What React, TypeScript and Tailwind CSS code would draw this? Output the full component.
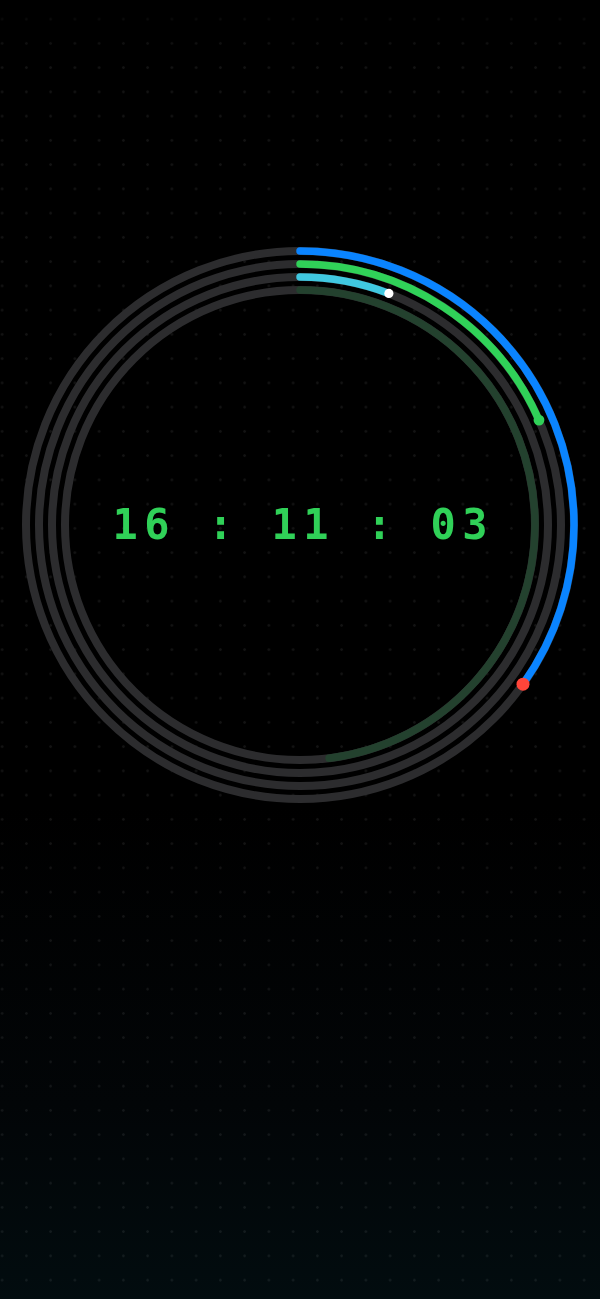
import React from "react";

const C = 280;

type Ring = { r: number; frac: number; color: string; dot?: { color: string; r: number } };

const rings: Ring[] = [
  { r: 274, frac: (4 + 11 / 60 + 3 / 3600) / 12, color: "#0a84ff", dot: { color: "#ff453a", r: 6.5 } },
  { r: 261, frac: (11 + 3 / 60) / 60, color: "#30d158", dot: { color: "#30d158", r: 5.4 } },
  { r: 248, frac: 3.5 / 60, color: "#40c8e0", dot: { color: "#ffffff", r: 4.6 } },
  { r: 235, frac: 0.48, color: "#23412e" },
];

function Clock() {
  return (
    <svg width={560} height={560} viewBox="0 0 560 560" className="block">
      {rings.map((ring, i) => {
        const circ = 2 * Math.PI * ring.r;
        const ang = ring.frac * 2 * Math.PI;
        const dx = C + ring.r * Math.sin(ang);
        const dy = C - ring.r * Math.cos(ang);
        return (
          <g key={i}>
            <circle cx={C} cy={C} r={ring.r} fill="none" stroke="#2c2c2e" strokeWidth={8} />
            <circle
              cx={C}
              cy={C}
              r={ring.r}
              fill="none"
              stroke={ring.color}
              strokeWidth={7.5}
              strokeLinecap="round"
              strokeDasharray={`${ring.frac * circ} ${circ}`}
              transform={`rotate(-90 ${C} ${C})`}
            />
            {ring.dot && <circle cx={dx} cy={dy} r={ring.dot.r} fill={ring.dot.color} />}
          </g>
        );
      })}
    </svg>
  );
}

export default function App() {
  return (
    <div className="min-h-screen w-full bg-[linear-gradient(to_bottom,#000000_0%,#000000_62%,#020507_85%,#020c0f_100%)]">
      <div className="min-h-screen w-full bg-[radial-gradient(circle,rgba(255,255,255,0.075)_1px,transparent_1.6px)] bg-[size:24.25px_24.25px] bg-[position:-10px_7px] [mask-image:linear-gradient(to_bottom,rgba(0,0,0,0.3),#000_60px)]">
        <div className="flex justify-center pt-[245px]">
          <div className="relative">
            <Clock />
            <div className="absolute inset-0 flex items-center justify-center">
              <span
                className="pl-[6.5px] text-[42px] leading-none tracking-[6.5px] text-[#30d158] font-bold"
                style={{ fontFamily: '"DejaVu Sans Mono", "Liberation Mono", monospace' }}
              >
                16 : 11 : 03
              </span>
            </div>
          </div>
        </div>
      </div>
    </div>
  );
}
